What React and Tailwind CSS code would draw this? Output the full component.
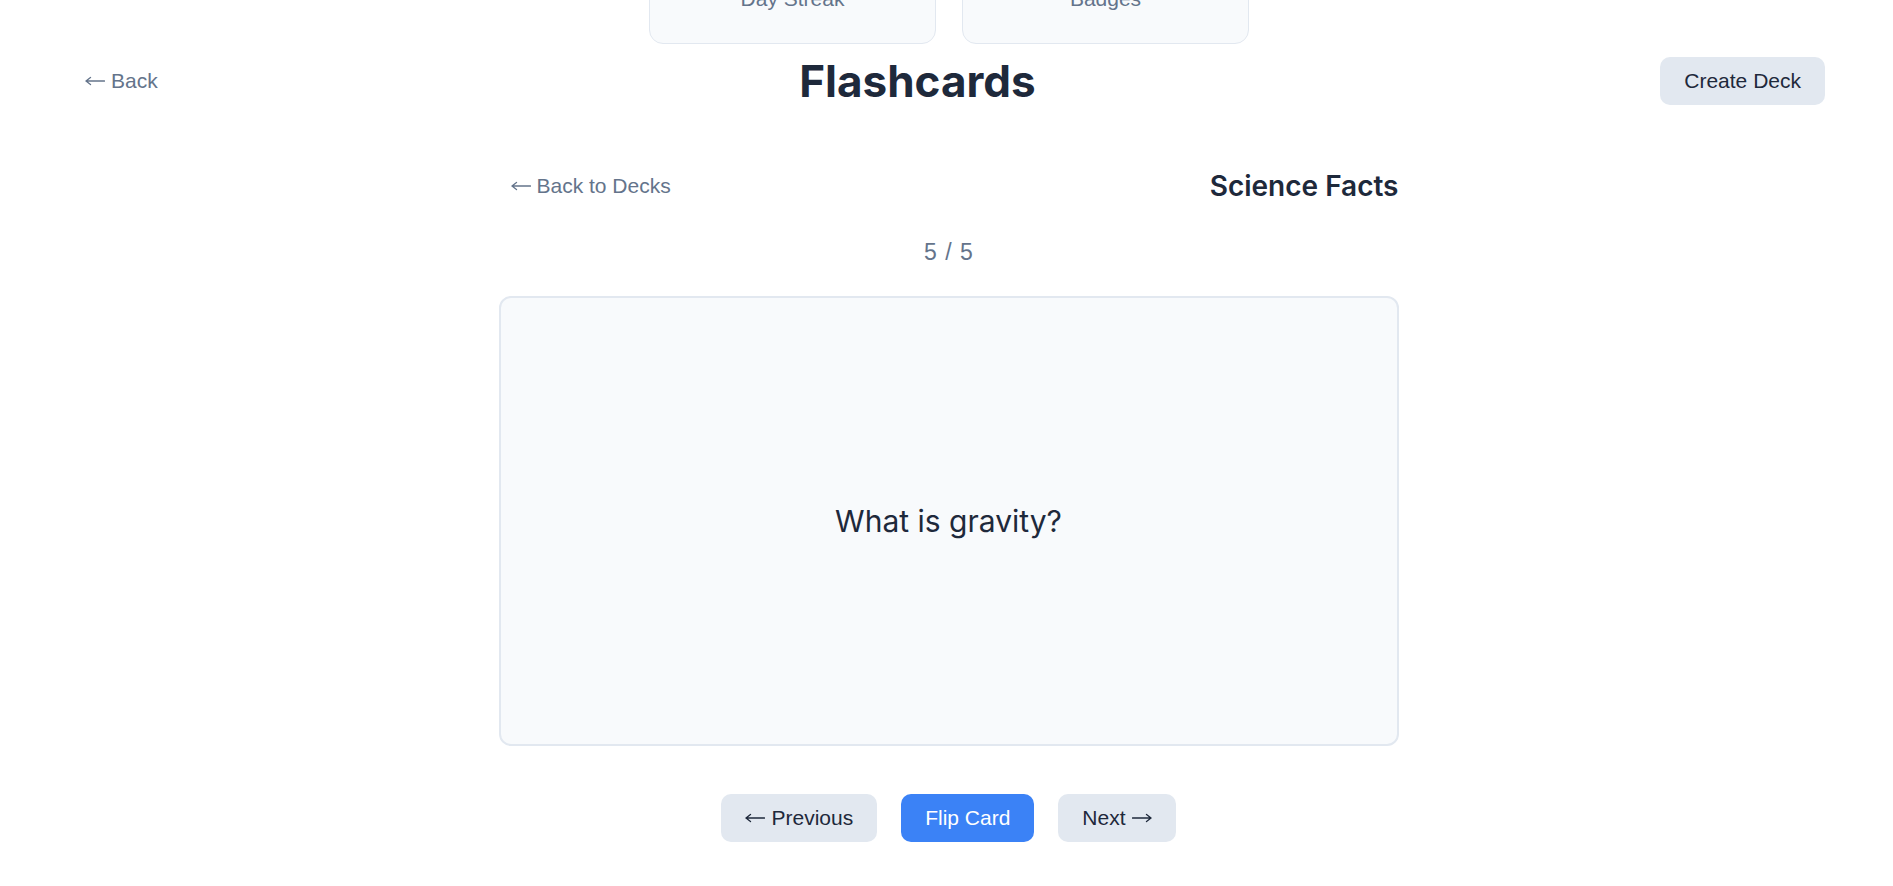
import React, { useState } from "react";

const cards = [
  { q: "What is photosynthesis?", a: "How plants turn light into energy" },
  { q: "What is H2O?", a: "Water" },
  { q: "What is the speed of light?", a: "About 299,792 km/s" },
  { q: "What is DNA?", a: "Deoxyribonucleic acid" },
  { q: "What is gravity?", a: "The force that attracts masses to each other" },
];

const stats = [
  { value: "7", label: "Day Streak" },
  { value: "3", label: "Badges" },
];

const sans = { fontFamily: '"Liberation Sans", Arial, sans-serif' };
const inter = { fontFamily: 'Inter, "Noto Sans", sans-serif' };

// thin long arrow like the one the browser draws for ← / →
const Arrow = ({ dir = "left" }) => (
  <svg
    width="20"
    height="10"
    viewBox="0 0 20 10"
    fill="none"
    stroke="currentColor"
    strokeWidth="1.3"
    strokeLinecap="round"
    className={dir === "right" ? "inline-block rotate-180" : "inline-block"}
    aria-hidden="true"
  >
    <path d="M1 5h18.5M1 5l4.5-3.5M1 5l4.5 3.5" />
  </svg>
);

export default function App() {
  const [index, setIndex] = useState(4);
  const [flipped, setFlipped] = useState(false);
  const card = cards[index];

  return (
    <div className="min-h-screen bg-white overflow-hidden" style={sans}>
      {/* stats (page is scrolled a little) */}
      <div className="flex gap-[26px] pl-[649px] -mt-[96px]">
        {stats.map((s) => (
          <div
            key={s.label}
            className="w-[287px] h-[140px] flex flex-col items-center justify-end pb-[30px] bg-[#f8fafc] border border-[#e2e8f0] rounded-[14px]"
          >
            <div className="text-[36px] font-bold text-[#1e293b]" style={inter}>
              {s.value}
            </div>
            <div className="text-[21px] leading-[28px] text-[#64748b]">{s.label}</div>
          </div>
        ))}
      </div>

      {/* header */}
      <div className="mt-[13px] px-[68px] h-[48px] flex items-center justify-between">
        <button className="px-[17px] text-[21px] text-[#64748b] flex items-center gap-[6px]">
          <Arrow />
          <span>Back</span>
        </button>
        <h1 className="text-[44px] leading-[48px] font-bold text-[#1e293b]" style={inter}>
          Flashcards
        </h1>
        <button className="h-[48px] px-[24px] rounded-[10px] bg-[#e2e8f0] text-[21px] text-[#1e293b]">
          Create Deck
        </button>
      </div>

      {/* study view */}
      <div className="mx-auto w-[904px] pl-[4px] mt-[63px]">
        <div className="h-[36px] flex items-center justify-between">
          <button className="text-[21px] text-[#64748b] pl-[12px] flex items-center gap-[6px]">
            <Arrow />
            <span>Back to Decks</span>
          </button>
          <h2 className="text-[28px] font-semibold text-[#1e293b]" style={inter}>
            Science Facts
          </h2>
        </div>

        <div className="mt-[34px] text-center text-[23px] leading-[28px] text-[#64748b] [word-spacing:2px]">
          {index + 1} / {cards.length}
        </div>

        <div
          onClick={() => setFlipped(!flipped)}
          className="mt-[30px] h-[450px] flex items-center justify-center bg-[#f8fafc] border-2 border-[#e2e8f0] rounded-[12px] cursor-pointer"
        >
          <p className="text-[30px] text-[#1e293b]" style={inter}>
            {flipped ? card.a : card.q}
          </p>
        </div>

        <div className="mt-[48px] flex justify-center gap-[24px] text-[21px]">
          <button
            onClick={() => { setIndex(Math.max(0, index - 1)); setFlipped(false); }}
            className="h-[48px] px-[24px] rounded-[10px] bg-[#e2e8f0] text-[#1e293b] flex items-center gap-[6px]"
          >
            <Arrow />
            <span>Previous</span>
          </button>
          <button
            onClick={() => setFlipped(!flipped)}
            className="h-[48px] px-[24px] rounded-[10px] bg-[#3b82f6] text-white"
          >
            Flip Card
          </button>
          <button
            onClick={() => { setIndex(Math.min(cards.length - 1, index + 1)); setFlipped(false); }}
            className="h-[48px] px-[24px] rounded-[10px] bg-[#e2e8f0] text-[#1e293b] flex items-center gap-[6px]"
          >
            <span>Next</span>
            <Arrow dir="right" />
          </button>
        </div>
      </div>
    </div>
  );
}
